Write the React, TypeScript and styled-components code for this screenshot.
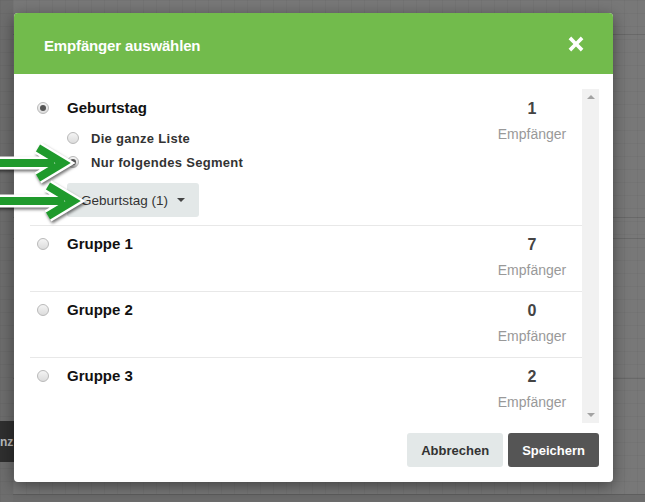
import React from 'react'
import styled, { createGlobalStyle } from 'styled-components'

const GlobalStyle = createGlobalStyle`
  html, body {
    margin: 0;
    padding: 0;
    width: 645px;
    height: 502px;
    overflow: hidden;
    font-family: 'Liberation Sans', Arial, sans-serif;
  }
`

const Page = styled.div`
  position: relative;
  width: 645px;
  height: 502px;
  overflow: hidden;
  background-color: #787878;
  background-image:
    linear-gradient(rgba(0, 0, 0, 0.035) 1px, transparent 1px),
    linear-gradient(90deg, rgba(0, 0, 0, 0.035) 1px, transparent 1px);
  background-size: 13px 13px;
`

const Backdrop = styled.div`
  display: grid;
  grid-template-columns: 13px 1fr;
  height: 100%;
`

const SideStrip = styled.div`
  display: flex;
  flex-direction: column;
  padding-top: 421px;
  background: rgba(0, 0, 0, 0.08);
`

const DarkTab = styled.div`
  height: 41px;
  width: 40px;
  display: flex;
  align-items: center;
  padding-left: 0;
  background: #2f2f2f;
  color: #bdbdbd;
  font-weight: bold;
  font-size: 12px;
  white-space: nowrap;
`

const BackArea = styled.div`
  display: flex;
  flex-direction: column;
`

const BackLine = styled.div<{ $top: number }>`
  margin-top: ${({ $top }) => $top}px;
  height: 1px;
  background: rgba(0, 0, 0, 0.12);
`

const BottomBand = styled.div`
  margin-top: auto;
  height: 7px;
  border-top: 1px solid #5e5e5e;
  background: #6c6c6c;
`

const Modal = styled.div`
  position: absolute;
  left: 14px;
  top: 13px;
  width: 599px;
  height: 469px;
  display: flex;
  flex-direction: column;
  background: #fff;
  border-radius: 4px;
  overflow: hidden;
  box-shadow: 0 4px 16px rgba(0, 0, 0, 0.45);
`

const Header = styled.div`
  height: 61px;
  flex: 0 0 61px;
  display: flex;
  align-items: center;
  justify-content: space-between;
  padding: 3px 29px 0 30px;
  box-sizing: border-box;
  background: #72bb4c;
`

const Title = styled.h4`
  margin: 0;
  color: #fff;
  font-size: 15px;
  font-weight: bold;
  letter-spacing: -0.15px;
`

const CloseButton = styled.button`
  padding: 0;
  margin-top: -3px;
  border: 0;
  background: none;
  cursor: pointer;
  display: flex;

  & svg {
    width: 16px;
    height: 16px;
    fill: #fff;
  }
`

const Body = styled.div`
  display: flex;
  padding: 15px 14px 0 16px;
`

const List = styled.div`
  flex: 1;
  height: 334px;
  overflow: hidden;
`

const Scrollbar = styled.div`
  width: 17px;
  height: 334px;
  display: flex;
  flex-direction: column;
  justify-content: space-between;
  align-items: center;
  padding: 6px 0;
  box-sizing: border-box;
  background: #f1f1f1;
`

const ScrollArrow = styled.span<{ $down?: boolean }>`
  width: 0;
  height: 0;
  border-left: 4px solid transparent;
  border-right: 4px solid transparent;
  ${({ $down }) =>
    $down ? 'border-top: 4px solid #a3a3a3;' : 'border-bottom: 4px solid #a3a3a3;'}
`

const Row = styled.div<{ $first?: boolean }>`
  display: grid;
  grid-template-columns: 37px 1fr 80px;
  padding: ${({ $first }) => ($first ? '9px 10px 8px 0' : '8px 10px 11px 0')};
  border-top: ${({ $first }) => ($first ? '0' : '1px solid #e8e8e8')};
`

const RadioCell = styled.div`
  display: flex;
  align-items: center;
  height: 20px;
  padding-left: 7px;
`

const Radio = styled.span<{ $checked?: boolean }>`
  position: relative;
  flex: 0 0 12px;
  width: 12px;
  height: 12px;
  box-sizing: border-box;
  border-radius: 50%;
  border: 1px solid #b9b9b9;
  background: linear-gradient(#f4f4f4, #dcdcdc);

  ${({ $checked }) =>
    $checked &&
    `
    &::after {
      content: '';
      position: absolute;
      left: 2px;
      top: 2px;
      width: 6px;
      height: 6px;
      border-radius: 50%;
      background: #555;
    }
  `}
`

const Main = styled.div`
  display: flex;
  flex-direction: column;
`

const GroupName = styled.div`
  font-size: 15px;
  line-height: 20px;
  font-weight: bold;
  color: #111;
`

const SubOptions = styled.div`
  display: flex;
  flex-direction: column;
  margin-top: 8px;
`

const SubOption = styled.label`
  display: flex;
  align-items: center;
  gap: 12px;
  height: 24px;
  font-size: 13px;
  font-weight: bold;
  color: #333;
  letter-spacing: 0.3px;
`

const Dropdown = styled.button`
  align-self: flex-start;
  display: flex;
  align-items: center;
  gap: 9px;
  width: 132px;
  height: 34px;
  margin-top: 9px;
  padding: 0 0 0 14px;
  border: 0;
  border-radius: 3px;
  background: #e3e8e8;
  font-family: 'Liberation Sans', Arial, sans-serif;
  font-size: 13.5px;
  color: #333;
  cursor: pointer;
`

const Caret = styled.span`
  width: 0;
  height: 0;
  border-left: 4px solid transparent;
  border-right: 4px solid transparent;
  border-top: 4px solid #444;
`

const CountCell = styled.div`
  display: flex;
  flex-direction: column;
  align-items: center;
`

const Count = styled.div`
  font-size: 16px;
  line-height: 22px;
  font-weight: bold;
  color: #444;
`

const CountLabel = styled.div`
  margin-top: 4px;
  font-size: 14px;
  line-height: 20px;
  color: #999;
`

const Footer = styled.div`
  display: flex;
  justify-content: flex-end;
  gap: 5px;
  padding: 10px 14px 15px 0;
`

const Button = styled.button<{ $primary?: boolean }>`
  height: 34px;
  padding: 0 14px;
  border: 0;
  border-radius: 3px;
  font-family: 'Liberation Sans', Arial, sans-serif;
  font-size: 13px;
  font-weight: bold;
  cursor: pointer;
  background: ${({ $primary }) => ($primary ? '#555' : '#e3e8e8')};
  color: ${({ $primary }) => ($primary ? '#fff' : '#333')};
`

const Arrow = styled.svg<{ $top: number }>`
  position: absolute;
  left: 0;
  top: ${({ $top }) => $top}px;
  width: 90px;
  height: 40px;
  overflow: visible;
  filter: drop-shadow(1px 2px 1.5px rgba(0, 0, 0, 0.55));
`

type Group = {
  name: string
  count: number
  checked?: boolean
  segment?: boolean
}

const groups: Group[] = [
  { name: 'Geburtstag', count: 1, checked: true, segment: true },
  { name: 'Gruppe 1', count: 7 },
  { name: 'Gruppe 2', count: 0 },
  { name: 'Gruppe 3', count: 2 },
]

const arrowPath = (tip: number) =>
  `M-10 20 H${tip - 9} M${tip - 25} 5 L${tip} 20 L${tip - 25} 35`

const PointerArrow = ({ top, tip }: { top: number; tip: number }) => (
  <Arrow $top={top} viewBox="0 0 90 40">
    <g fill="none" strokeLinejoin="miter" strokeLinecap="butt">
      <path d={arrowPath(tip)} stroke="#fff" strokeWidth="13" />
      <path d={arrowPath(tip)} stroke="#1f9a2c" strokeWidth="8" />
    </g>
  </Arrow>
)

export default function App() {
  return (
    <>
      <GlobalStyle />
      <Page>
        <Backdrop>
          <SideStrip>
            <DarkTab>nz</DarkTab>
          </SideStrip>
          <BackArea>
            <BackLine $top={34} />
            <BackLine $top={182} />
            <BackLine $top={20} />
            <BackLine $top={139} />
            <BottomBand />
          </BackArea>
        </Backdrop>

        <Modal>
          <Header>
            <Title>Empfänger auswählen</Title>
            <CloseButton aria-label="Schließen">
              <svg viewBox="0 0 16 16">
                <path d="M3.2 0.6 8 5.4 12.8 0.6 15.4 3.2 10.6 8 15.4 12.8 12.8 15.4 8 10.6 3.2 15.4 0.6 12.8 5.4 8 0.6 3.2Z" />
              </svg>
            </CloseButton>
          </Header>

          <Body>
            <List>
              {groups.map((group, i) => (
                <Row key={group.name} $first={i === 0}>
                  <RadioCell>
                    <Radio $checked={group.checked} />
                  </RadioCell>
                  <Main>
                    <GroupName>{group.name}</GroupName>
                    {group.segment && (
                      <>
                        <SubOptions>
                          <SubOption>
                            <Radio />
                            Die ganze Liste
                          </SubOption>
                          <SubOption>
                            <Radio $checked />
                            Nur folgendes Segment
                          </SubOption>
                        </SubOptions>
                        <Dropdown>
                          Geburtstag (1)
                          <Caret />
                        </Dropdown>
                      </>
                    )}
                  </Main>
                  <CountCell>
                    <Count>{group.count}</Count>
                    <CountLabel>Empfänger</CountLabel>
                  </CountCell>
                </Row>
              ))}
            </List>
            <Scrollbar>
              <ScrollArrow />
              <ScrollArrow $down />
            </Scrollbar>
          </Body>

          <Footer>
            <Button>Abbrechen</Button>
            <Button $primary>Speichern</Button>
          </Footer>
        </Modal>

        <PointerArrow top={143} tip={63} />
        <PointerArrow top={181} tip={73} />
      </Page>
    </>
  )
}
